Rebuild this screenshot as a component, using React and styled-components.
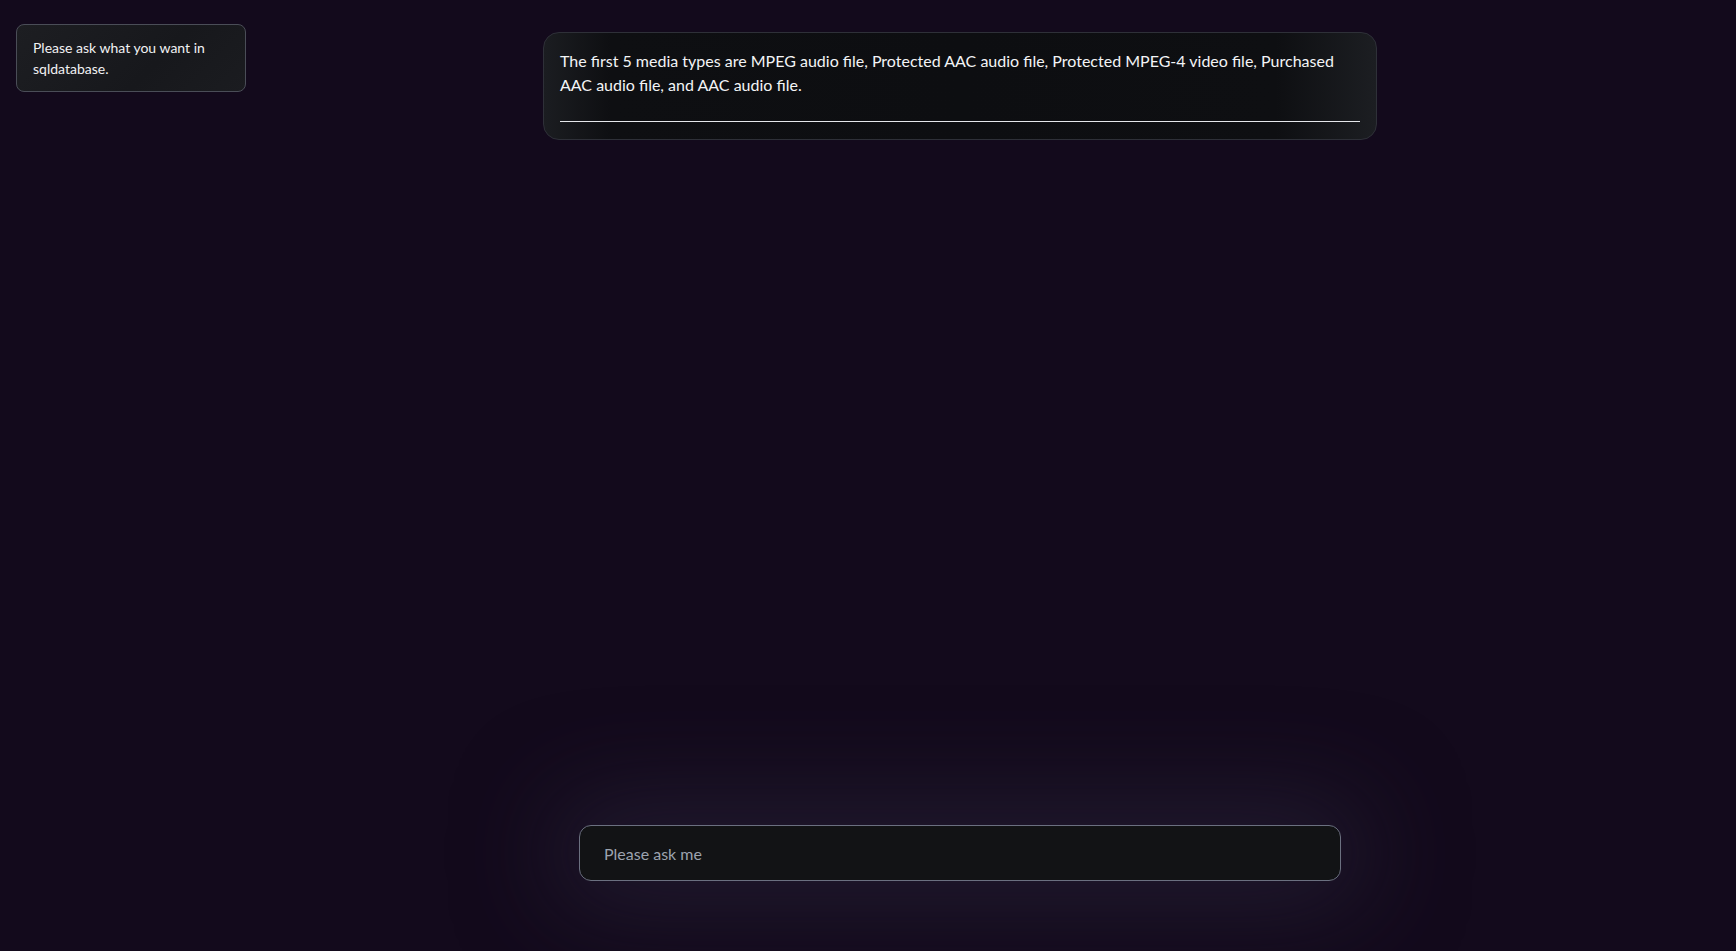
import React from "react";
import styled, { createGlobalStyle } from "styled-components";

const Global = createGlobalStyle`
  html, body { margin: 0; padding: 0; background: #130a1c; }
  body { font-family: Lato, "Noto Sans", sans-serif; color: #f3f4f6; }
  * { box-sizing: border-box; }
`;

const Page = styled.div`
  display: flex;
  height: 100vh;
  background: #130a1c;
`;

const Sidebar = styled.aside`
  flex: 0 0 246px;
  padding: 24px 0 0 16px;
`;

const InfoCard = styled.div`
  width: 230px;
  padding: 12px 16px;
  border: 1px solid #4a4d57;
  border-radius: 8px;
  background: linear-gradient(135deg, #1d1e22 0%, #17181c 60%, #1b1c20 100%);
  font-size: 14px;
  line-height: 21px;
  color: #f1f1f3;
`;

const Main = styled.main`
  flex: 1;
  display: flex;
  flex-direction: column;
  align-items: center;
  padding: 32px 62px 70px 0;
`;

const Messages = styled.div`
  flex: 1;
  display: flex;
  flex-direction: column;
  align-items: center;
`;

const MessageCard = styled.div`
  width: 834px;
  padding: 16px 16px 17px;
  border: 1px solid #2e3038;
  border-radius: 16px;
  background: linear-gradient(90deg, #1b1d21 0%, #0e0f12 8%, #0d0e11 50%, #0e0f12 88%, #1c1e22 100%);
`;

const MessageText = styled.p`
  margin: 0 0 24px;
  font-size: 16px;
  line-height: 24px;
  color: #f3f4f6;
`;

const Rule = styled.hr`
  margin: 0;
  border: 0;
  height: 1px;
  background: #e5e7eb;
`;

const InputWrap = styled.div`
  width: 762px;
  border-radius: 12px;
  box-shadow: 0 0 100px 20px rgba(45, 40, 62, 0.6);
`;

const Input = styled.input`
  display: block;
  width: 100%;
  height: 56px;
  padding: 0 24px;
  border: 1px solid #6b7080;
  border-radius: 12px;
  background: #121315;
  color: #e5e7eb;
  font-family: Lato, "Noto Sans", sans-serif;
  font-size: 16px;
  outline: none;
  &::placeholder { color: #9ca3af; }
`;

export default function App() {
  return (
    <>
      <Global />
      <Page>
        <Sidebar>
          <InfoCard>Please ask what you want in sqldatabase.</InfoCard>
        </Sidebar>
        <Main>
          <Messages>
            <MessageCard>
              <MessageText>
                The first 5 media types are MPEG audio file, Protected AAC audio file, Protected MPEG-4 video file, Purchased AAC audio file, and AAC audio file.
              </MessageText>
              <Rule />
            </MessageCard>
          </Messages>
          <InputWrap>
            <Input placeholder="Please ask me" />
          </InputWrap>
        </Main>
      </Page>
    </>
  );
}
